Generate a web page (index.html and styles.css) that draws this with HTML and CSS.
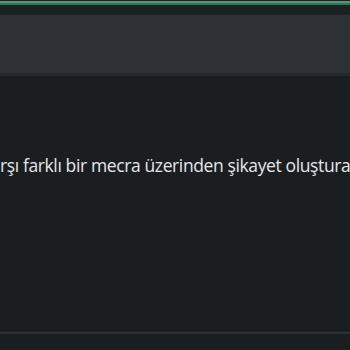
FILE: index.html
```html
<!DOCTYPE html>
<html lang="tr">
<head>
<meta charset="utf-8">
<link rel="stylesheet" href="styles.css">
</head>
<body>
<div class="accent"></div>
<div class="topbar"></div>
<div class="subbar"></div>
<div class="sep"></div>
<main class="content">
  <p class="msg">rşı farklı bir mecra üzerinden şikayet oluştura</p>
</main>
<div class="footer-line"></div>
<div class="footer"></div>
</body>
</html>
```
FILE: styles.css
```css
html, body {
  margin: 0;
  padding: 0;
  width: 350px;
  height: 350px;
  overflow: hidden;
  background: #1b1e20;
  font-family: "Open Sans", "Noto Sans", sans-serif;
}
body {
  display: flex;
  flex-direction: column;
}
.accent {
  height: 5px;
  background: linear-gradient(#1e2724 0 1px, #4a9a78 1px 3px, #2f7559 3px 5px);
  flex: none;
}
.topbar {
  height: 10px;
  background: #1c2123;
  flex: none;
}
.subbar {
  height: 58px;
  background: #2d3135;
  flex: none;
}
.sep {
  height: 3px;
  background: #25292b;
  flex: none;
}
.content {
  flex: 1;
  display: flex;
  flex-direction: column;
  padding-top: 77px;
}
.msg {
  margin: 0;
  white-space: nowrap;
  color: #e4e6e7;
  font-size: 17.5px;
  line-height: 24px;
  letter-spacing: -0.38px;
}
.footer-line {
  height: 3px;
  background: linear-gradient(#222629 0 1px, #2c3033 1px 3px);
  flex: none;
}
.footer {
  height: 16px;
  background: #1b1e20;
  flex: none;
}
```
